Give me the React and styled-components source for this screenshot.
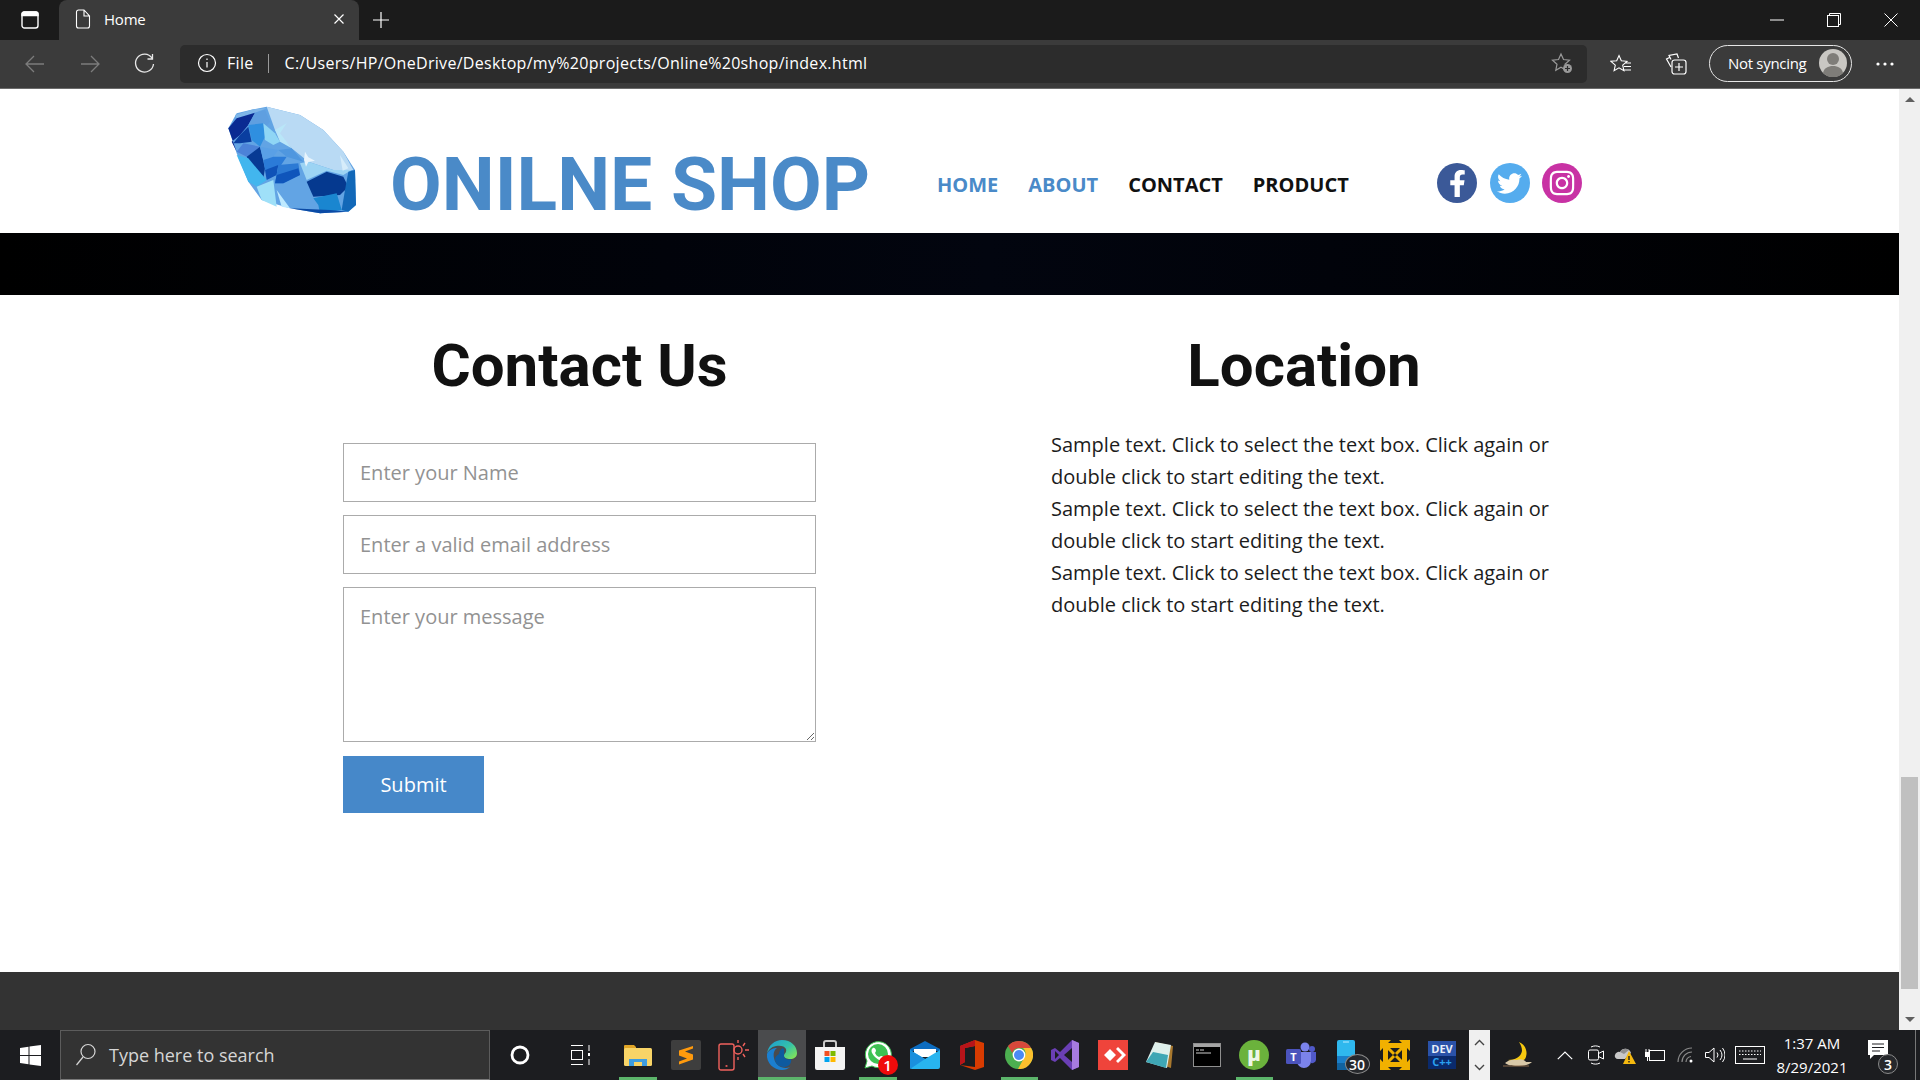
import React from "react";
import styled, { createGlobalStyle } from "styled-components";
import { FaFacebookF, FaTwitter, FaInstagram } from "react-icons/fa";

const GlobalStyle = createGlobalStyle`
    html, body {
        margin: 0;
        height: 100%;
        overflow: hidden;
    }
    * {
        box-sizing: border-box;
    }
`;

const Screen = styled.div`
    display: flex;
    flex-direction: column;
    width: 1920px;
    height: 1080px;
    font-family: "Open Sans", sans-serif;
    background: #fff;
`;

/* browser chrome */
const TitleBar = styled.div`
    display: flex;
    align-items: center;
    height: 40px;
    background: #1b1b1b;
    color: #fff;
`;

const TabsButton = styled.div`
    display: flex;
    justify-content: center;
    align-items: center;
    width: 59px;
    height: 40px;
`;

const Tab = styled.div`
    display: flex;
    align-items: center;
    width: 300px;
    height: 40px;
    padding: 0 14px 2px 16px;
    background: #3b3b3b;
    border-radius: 8px 8px 0 0;
    font-size: 15px;
    gap: 13px;
`;

const TabName = styled.span`
    flex: 1;
    letter-spacing: -0.2px;
`;

const NewTab = styled.div`
    display: flex;
    justify-content: center;
    align-items: center;
    width: 44px;
    height: 40px;
`;

const WindowControls = styled.div`
    display: flex;
    margin-left: auto;
    padding-right: 1px;
`;

const WindowButton = styled.div`
    display: flex;
    justify-content: center;
    align-items: center;
    width: 57px;
    height: 40px;
`;

const Toolbar = styled.div`
    display: flex;
    align-items: center;
    height: 49px;
    padding: 0 0 1px 7px;
    background: #3b3b3b;
    border-bottom: 1px solid #6b6b6b;
    color: #fff;
`;

const NavButton = styled.div`
    display: flex;
    justify-content: center;
    align-items: center;
    width: 55px;
    height: 38px;
    color: ${(p) => (p.$dim ? "#7c7c7c" : "#e8e8e8")};
`;

const AddressBar = styled.div`
    display: flex;
    align-items: center;
    width: 1407px;
    height: 38px;
    margin-left: 8px;
    padding: 0 14px 1px 17px;
    background: #2c2c2c;
    border-radius: 5px;
    font-size: 16px;
`;

const FileLabel = styled.span`
    margin-left: 10px;
    padding-right: 14px;
    border-right: 1px solid #9a9a9a;
    line-height: 19px;
    letter-spacing: 0.3px;
`;

const Url = styled.span`
    flex: 1;
    margin-left: 16px;
    letter-spacing: 0.3px;
    white-space: nowrap;
`;

const ToolIcon = styled.div`
    display: flex;
    justify-content: center;
    align-items: center;
    width: ${(p) => p.$w}px;
    height: 38px;
`;

const SyncPill = styled.div`
    display: flex;
    align-items: center;
    justify-content: space-between;
    width: 143px;
    height: 37px;
    margin-left: 12px;
    padding: 0 4px 1px 18px;
    border: 1px solid #e6e6e6;
    border-radius: 19px;
    font-size: 15px;
    letter-spacing: -0.3px;
`;

/* page */
const Viewport = styled.div`
    display: flex;
    flex: 1;
    min-height: 0;
`;

const Page = styled.div`
    display: flex;
    flex-direction: column;
    flex: 1;
    min-width: 0;
`;

const Header = styled.header`
    display: flex;
    align-items: flex-start;
    height: 144px;
    padding-left: 220px;
    background: #fff;
`;

const Logo = styled.svg`
    flex: none;
    width: 150px;
    height: 120px;
    margin-top: 11px;
`;

const Brand = styled.h1`
    width: 547px;
    margin: 53px 0 0 20px;
    font-family: Roboto, sans-serif;
    font-size: 75px;
    font-weight: 700;
    line-height: 84px;
    color: #4a8ac8;
    white-space: nowrap;
`;

const Nav = styled.nav`
    display: flex;
    gap: 30px;
    width: 500px;
    margin-top: 82px;
`;

const NavLink = styled.a`
    font-size: 20px;
    font-weight: 700;
    line-height: 28px;
    color: ${(p) => (p.$accent ? "#4a8ac8" : "#111")};
`;

const Socials = styled.div`
    display: flex;
    gap: 12.5px;
    margin-top: 74px;
`;

const SocialCircle = styled.a`
    display: flex;
    justify-content: center;
    align-items: center;
    width: 40px;
    height: 40px;
    border-radius: 50%;
    background: ${(p) => p.$bg};
    color: #fff;
    font-size: ${(p) => p.$size}px;
`;

const Banner = styled.div`
    height: 62px;
    background: linear-gradient(90deg, #000 0%, #01030a 35%, #02050f 52%, #01030a 70%, #000 100%);
`;

const Content = styled.main`
    display: flex;
    flex: 1;
    gap: 235px;
    padding: 35px 0 0 343px;
`;

const FormColumn = styled.section`
    width: 473px;
`;

const InfoColumn = styled.section`
    width: 506px;
`;

const Heading = styled.h2`
    margin: 0 0 ${(p) => p.$gap}px;
    font-family: Roboto, sans-serif;
    font-size: 60px;
    font-weight: 700;
    line-height: 72px;
    text-align: center;
    color: #111;
`;

const Input = styled.input`
    display: block;
    width: 100%;
    height: 59px;
    margin-bottom: 13px;
    padding: 0 16px;
    border: 1px solid #ababab;
    outline: none;
    font-family: "Open Sans", sans-serif;
    font-size: 20px;
    &::placeholder {
        color: #929292;
    }
`;

const Message = styled.textarea`
    display: block;
    width: 100%;
    height: 155px;
    margin-bottom: 14px;
    padding: 15px 16px;
    border: 1px solid #ababab;
    outline: none;
    font-family: "Open Sans", sans-serif;
    font-size: 20px;
    &::placeholder {
        color: #929292;
    }
`;

const SubmitButton = styled.button`
    width: 141px;
    height: 57px;
    border: none;
    background: #4688c9;
    color: #fff;
    font-family: "Open Sans", sans-serif;
    font-size: 20px;
`;

const Paragraph = styled.p`
    margin: 0;
    font-size: 20px;
    line-height: 32px;
    color: #1c1c1c;
`;

const Footer = styled.footer`
    height: 58px;
    background: #333;
`;

const Scrollbar = styled.aside`
    display: flex;
    flex-direction: column;
    align-items: center;
    width: 21px;
    padding-top: 8px;
    background: #f0f0f0;
`;

const ScrollThumb = styled.div`
    width: 17px;
    height: 212px;
    margin-top: auto;
    margin-bottom: 28px;
    background: #c0c0c0;
`;

const ScrollArrow = styled.div`
    width: 0;
    height: 0;
    margin-bottom: ${(p) => p.$bottom || 0}px;
    border-left: 5px solid transparent;
    border-right: 5px solid transparent;
    ${(p) => (p.$up ? "border-bottom" : "border-top")}: 5px solid #606060;
`;

/* taskbar */
const Taskbar = styled.div`
    display: flex;
    height: 50px;
    background: #1c1d20;
    color: #fff;
`;

const StartButton = styled.div`
    display: flex;
    flex: none;
    justify-content: center;
    align-items: center;
    width: 60px;
`;

const SearchBox = styled.div`
    display: flex;
    flex: none;
    align-items: center;
    width: 430px;
    padding-left: 14px;
    gap: 13px;
    background: #333;
    border: 1px solid #5c5c5c;
    border-bottom-color: #7a7a7a;
    color: #d6d6d6;
    font-size: 18px;
`;

const ShellButton = styled.div`
    display: flex;
    flex: none;
    justify-content: center;
    align-items: center;
    width: 60px;
`;

const Pinned = styled.div`
    display: flex;
    flex: none;
    margin-left: 3.5px;
    width: 855.5px;
`;

const Tile = styled.div`
    position: relative;
    display: flex;
    flex: none;
    justify-content: center;
    align-items: center;
    width: ${(p) => (p.$wide ? 48 : 47)}px;
    background: ${(p) => (p.$active ? "#4a4b4d" : "transparent")};
    &::after {
        content: "";
        display: ${(p) => (p.$running ? "block" : "none")};
        position: absolute;
        bottom: 0;
        left: ${(p) => (p.$active ? 0 : 5)}px;
        right: ${(p) => (p.$active ? 0 : 5)}px;
        height: 3px;
        background: #5cb56b;
    }
`;

const OverflowStrip = styled.div`
    display: flex;
    flex: none;
    flex-direction: column;
    justify-content: space-around;
    align-items: center;
    width: 21px;
    background: #f0f0f0;
    color: #444;
`;

const TraySlot = styled.div`
    display: flex;
    justify-content: center;
    align-items: center;
    flex: none;
    width: ${(p) => p.$w}px;
`;

const Clock = styled(TraySlot)`
    flex-direction: column;
    font-size: 15px;
    line-height: 24px;
    white-space: nowrap;
`;

const TrayEdge = styled.div`
    flex: none;
    width: 6px;
    border-right: 1px solid #777;
`;

const line = { fill: "none", stroke: "currentColor" };

const Gem = () => (
    <Logo viewBox="0 0 450 360">
        <polygon fill="#62a4e4" points="140,20 240,45 310,90 370,155 405,210 408,315 385,335 300,340 210,325 125,300 85,245 50,160 25,85 50,40 100,28" />
        <polygon fill="#b9daf4" points="140,20 240,45 310,90 370,155 400,210 340,210 265,185 215,145 165,90" />
        <polygon fill="#7fb6e8" points="45,45 100,28 140,25 105,38 50,55" />
        <polygon fill="#0a2a92" points="25,85 50,55 105,38 85,75 60,105 35,125 50,155" />
        <polygon fill="#5f9fe0" points="105,38 135,30 150,65 130,90 85,75" />
        <polygon fill="#2f8fe0" points="85,75 130,70 135,110 120,140 95,120" />
        <polygon fill="#8fd6f5" points="130,70 165,100 180,125 160,135 135,120" />
        <polygon fill="#b9e6f8" points="165,90 200,70 180,100 215,145 180,125" />
        <polygon fill="#0a3ea0" points="60,105 85,80 95,125 60,130 40,130" />
        <polygon fill="#4c82d8" points="50,155 70,130 120,140 80,170" />
        <polygon fill="#073a94" points="80,170 120,140 135,205 130,235 100,205" />
        <polygon fill="#5aa0e6" points="120,140 175,150 160,170 130,180" />
        <polygon fill="#2b7bd8" points="130,180 160,170 200,170 180,200 135,210" />
        <polygon fill="#4f97df" points="175,150 215,145 250,185 200,170" />
        <polygon fill="#0f52b8" points="135,210 175,195 170,225 140,240" />
        <polygon fill="#2c7ad4" points="175,195 235,190 240,225 190,250 165,250" />
        <polygon fill="#0f55bb" points="165,250 170,225 235,205 240,225 190,250" />
        <polygon fill="#42b6ee" points="50,165 85,175 140,240 110,260 85,245" />
        <polygon fill="#9fe0f8" points="110,260 160,240 170,320 125,300" />
        <polygon fill="#bfeaff" points="170,270 210,325 185,320" />
        <polygon fill="#9cd4f4" points="265,185 340,210 395,210 370,225 320,212 260,240 240,190" />
        <polygon fill="#05398f" points="260,245 320,215 370,230 385,260 360,285 280,290" />
        <polygon fill="#1268b8" points="385,215 405,210 408,315 385,335 365,330 375,270" />
        <polygon fill="#1a86d0" points="280,295 350,280 365,330 300,340 295,315" />
        <polygon fill="#0b4aa5" points="210,325 300,340 385,335 330,330" />
        <polygon fill="#d6ecfa" points="360,165 385,205 368,212" />
        <polygon fill="#e8f4fc" points="255,155 265,172 285,182 265,186 258,200 252,180" />
    </Logo>
);

const EdgeLogo = () => (
    <svg width="32" height="32" viewBox="0 0 32 32">
        <defs>
            <linearGradient id="edgeTop" x1="0" y1="0" x2="1" y2="0.8">
                <stop offset="0" stopColor="#1a9ad6" />
                <stop offset="0.6" stopColor="#35c1a8" />
                <stop offset="1" stopColor="#7ee35c" />
            </linearGradient>
        </defs>
        <path d="M1 15C2 6 9 1 16 1c9 0 15 6 15 13 0 4-3 6-7 6-3 0-6-1-6-3 0-3 3-3 2-7C19 7 14 6 10 7 5 8 2 11 1 15z" fill="url(#edgeTop)" />
        <path d="M1 15c2-5 7-6 10-6-3 2-4 6-3 10 1 6 6 10 12 10 2 0 4-1 5-2-3 3-6 4-9 4C8 31 0 24 1 15z" fill="#1b7fd0" />
        <path d="M13 15c0-3 2-5 4-6 2 2 1 5 1 8 0 3 4 4 7 3 1 4-2 8-7 8-6 0-9-4-9-8 0-2 2-4 4-5z" fill="#0e5a9f" />
    </svg>
);

const pinnedIcons = [
    {
        running: true,
        icon: (
            <svg width="28" height="24" viewBox="0 0 28 24">
                <path d="M0 3a1 1 0 0 1 1-1h9l2 2v3H0z" fill="#e0a527" />
                <rect y="5" width="28" height="18" rx="1.5" fill="#f8d467" />
                <path d="M5 23v-7h18v7h-5v-4h-8v4z" fill="#3e9de0" />
            </svg>
        ),
    },
    {
        icon: (
            <svg width="30" height="30" viewBox="0 0 30 30">
                <rect width="30" height="30" rx="2" fill="#3e3e3e" />
                <path d="M22 6 8 10.5v5l8 3-8 3v3l14-5v-5l-8-3 8-3z" fill="#ff9a0d" />
            </svg>
        ),
    },
    {
        icon: (
            <svg width="32" height="32" viewBox="0 0 32 32" fill="none" stroke="#f0625d" strokeWidth="1.4">
                <rect x="1" y="5" width="15" height="26" rx="2" />
                <circle cx="8.5" cy="27" r=".4" />
                <circle cx="20" cy="11" r="4" />
                <path d="M20 1v3M27 4l-2 3M31 11h-4M27 18l-2-3M20 21v-3" />
            </svg>
        ),
    },
    { running: true, active: true, icon: <EdgeLogo /> },
    {
        icon: (
            <svg width="30" height="30" viewBox="0 0 30 30">
                <path d="M9 8V3a2 2 0 0 1 2-2h8a2 2 0 0 1 2 2v5" fill="none" stroke="#c9c9c9" strokeWidth="2" />
                <path d="M0 7h30v21a2 2 0 0 1-2 2H2a2 2 0 0 1-2-2z" fill="#f4f4f4" />
                <rect x="9.5" y="11" width="5" height="5" fill="#f25022" />
                <rect x="15.5" y="11" width="5" height="5" fill="#7fba00" />
                <rect x="9.5" y="17" width="5" height="5" fill="#00a4ef" />
                <rect x="15.5" y="17" width="5" height="5" fill="#ffb900" />
            </svg>
        ),
    },
    {
        running: true,
        badge: "1",
        icon: (
            <svg width="30" height="30" viewBox="0 0 30 30">
                <path d="M2 28l2-7A13 13 0 1 1 9 26z" fill="#fff" stroke="#3ec254" strokeWidth="1" />
                <circle cx="15" cy="14" r="10" fill="#3ec254" />
                <path d="M10 8c2-1 3 2 3 3l-1 2c1 2 2 3 4 4l2-1c1 0 4 1 3 3-2 3-6 1-9-2s-5-7-2-9z" fill="#fff" />
            </svg>
        ),
    },
    {
        icon: (
            <svg width="30" height="28" viewBox="0 0 30 28">
                <path d="M0 8 15 0l15 8v2H0z" fill="#0c6cc0" />
                <path d="M4 8h22v8H4z" fill="#fff" />
                <path d="M0 9l15 9 15-9v17a2 2 0 0 1-2 2H2a2 2 0 0 1-2-2z" fill="#28b4ef" />
                <path d="M0 9l15 9-15 10z" fill="#1a8fdd" />
            </svg>
        ),
    },
    {
        icon: (
            <svg width="24" height="30" viewBox="0 0 24 30">
                <path d="M0 6 15 0l9 3v24l-9 3-15-5 15 2V6L5 8v14l-5 3z" fill="#d83b01" />
                <path d="M0 6 15 0v6L5 8v14l-5 3z" fill="#b7141a" />
            </svg>
        ),
    },
    {
        running: true,
        icon: (
            <svg width="28" height="28" viewBox="0 0 28 28">
                <circle cx="14" cy="14" r="14" fill="#4caf50" />
                <path d="M14 0a14 14 0 0 1 12.1 7H14a7 7 0 0 0-6.7 5L3 5a14 14 0 0 1 11-5z" fill="#d9483b" />
                <path d="M26.1 7A14 14 0 0 1 13 28l6-11a7 7 0 0 0-1-10z" fill="#fbc02d" />
                <circle cx="14" cy="14" r="6.4" fill="#fff" />
                <circle cx="14" cy="14" r="5" fill="#4a8af4" />
            </svg>
        ),
    },
    {
        icon: (
            <svg width="30" height="30" viewBox="0 0 30 30">
                <path d="M21 0 9 12l-5-4-4 2v10l4 2 5-4 12 12 7-3V3z" fill="#6a3fb5" />
                <path d="M21 8v14l-8-7z" fill="#1c1d20" />
                <path d="M21 0l7 3v24l-7 3z" fill="#a77be0" />
                <path d="M4 11l4 4-4 4z" fill="#1c1d20" />
            </svg>
        ),
    },
    {
        icon: (
            <svg width="30" height="30" viewBox="0 0 30 30">
                <rect width="30" height="30" fill="#ef443b" />
                <path d="M12 9l6 6-6 6-6-6zM18 9l2-2 8 8-8 8-2-2 6-6z" fill="#fff" />
            </svg>
        ),
    },
    {
        icon: (
            <svg width="28" height="28" viewBox="0 0 28 28">
                <path d="M9 1 27 5l-2 22-6-2z" fill="#a8782e" />
                <path d="M9 1 25 4 21 27 0 21z" fill="#dff0ec" />
                <path d="M7 11 22 14 20 27 0 21z" fill="#3fa7b5" />
            </svg>
        ),
    },
    {
        icon: (
            <svg width="28" height="24" viewBox="0 0 28 24">
                <rect x=".5" y=".5" width="27" height="23" fill="#000" stroke="#8f8f8f" />
                <rect x="1" y="1" width="26" height="3" fill="#a5a5a5" />
                <path d="M3 7h3M7 7h4M3 10h5M8 10h10" stroke="#cfcfcf" strokeWidth="1" />
            </svg>
        ),
    },
    {
        running: true,
        icon: (
            <svg width="30" height="30" viewBox="0 0 30 30">
                <circle cx="15" cy="15" r="15" fill="#6bb23c" />
                <text x="15" y="21" textAnchor="middle" fontFamily="Open Sans" fontWeight="800" fontSize="20" fill="#eef6e8">µ</text>
            </svg>
        ),
    },
    {
        icon: (
            <svg width="30" height="26" viewBox="0 0 30 26">
                <circle cx="19" cy="5" r="4.5" fill="#7b83eb" />
                <circle cx="26" cy="7" r="3" fill="#5059c9" />
                <path d="M21 10h9v8a4 4 0 0 1-5 3z" fill="#5059c9" />
                <path d="M9 10h16v9a7 7 0 0 1-14 0z" fill="#7b83eb" />
                <rect y="7" width="15" height="15" rx="1.5" fill="#4b53bc" />
                <text x="7.5" y="19" textAnchor="middle" fontFamily="Open Sans" fontWeight="700" fontSize="11" fill="#fff">T</text>
            </svg>
        ),
    },
    {
        badge30: true,
        icon: (
            <svg width="22" height="30" viewBox="0 0 22 30">
                <path d="M0 2a2 2 0 0 1 2-2h14a2 2 0 0 1 2 2v28H2a2 2 0 0 1-2-2z" fill="#2fb8ee" />
                <rect y="16" width="18" height="7" fill="#1a7fc9" />
                <rect y="23" width="18" height="7" fill="#11629f" />
                <rect x="6" y="1.5" width="6" height="1" fill="#b9ecff" />
            </svg>
        ),
    },
    {
        icon: (
            <svg width="30" height="30" viewBox="0 0 30 30">
                <path d="M0 0h11L8 3h14l-3-3h11v11l-3-3v14l3-3v11H19l3-3H8l3 3H0V19l3 3V8l-3 3z" fill="#f1b000" />
                <path d="M8 8h14v14H8z" fill="#1c1d20" />
                <path d="M6 6l8 8M24 6l-8 8M6 24l8-8M24 24l-8-8" stroke="#f1b000" strokeWidth="3" />
            </svg>
        ),
    },
    {
        icon: (
            <svg width="28" height="28" viewBox="0 0 28 28">
                <rect width="28" height="28" fill="#2a52a8" />
                <rect y="15" width="28" height="13" fill="#0a2a6c" />
                <text x="14" y="12" textAnchor="middle" fontFamily="Open Sans" fontWeight="700" fontSize="11" fill="#e8eef8">DEV</text>
                <text x="14" y="25" textAnchor="middle" fontFamily="Open Sans" fontWeight="700" fontSize="11" fill="#2aa0f0">C++</text>
            </svg>
        ),
    },
];

const TileBadge = styled.span`
    position: absolute;
    display: flex;
    justify-content: center;
    align-items: center;
    left: 24px;
    top: 25px;
    width: 20px;
    height: 20px;
    border-radius: 50%;
    background: #f00b0b;
    color: #fff;
    font-size: 15px;
    font-weight: 600;
`;

const CountBadge = styled.span`
    position: absolute;
    display: flex;
    justify-content: center;
    align-items: center;
    left: 20px;
    top: 24px;
    width: 25px;
    height: 20px;
    border-radius: 50%;
    background: #26282c;
    border: 1px solid #8a8a8a;
    color: #fff;
    font-size: 14px;
    font-weight: 600;
`;

const NotifyBadge = styled.span`
    position: absolute;
    display: flex;
    justify-content: center;
    align-items: center;
    left: 10px;
    top: 14px;
    width: 20px;
    height: 20px;
    border-radius: 50%;
    background: #26282c;
    border: 1px solid #8a8a8a;
    color: #fff;
    font-size: 14px;
    font-weight: 600;
`;

const NotifyIcon = styled.div`
    position: relative;
    width: 24px;
    height: 30px;
`;

const paragraphLines = [1, 2, 3];

export default function App() {
    return (
        <Screen>
            <GlobalStyle />
            <TitleBar>
                <TabsButton>
                    <svg width="18" height="18" viewBox="0 0 18 18" {...line} strokeWidth="1.4">
                        <rect x="1" y="1" width="16" height="16" rx="2.5" />
                        <path d="M1 4.5h16V3a2 2 0 0 0-2-2H3a2 2 0 0 0-2 2z" fill="currentColor" />
                    </svg>
                </TabsButton>
                <Tab>
                    <svg width="16" height="20" viewBox="0 0 16 20" {...line} strokeWidth="1.1">
                        <path d="M1.5 3a2 2 0 0 1 2-2H9l5.500 6v10a2 2 0 0 1-2 2h-9a2 2 0 0 1-2-2zM9 1v6h5.500" />
                    </svg>
                    <TabName>Home</TabName>
                    <svg width="12" height="12" viewBox="0 0 12 12" {...line} strokeWidth="1.2">
                        <path d="M1.500 1.500l9 9M10.500 1.500l-9 9" />
                    </svg>
                </Tab>
                <NewTab>
                    <svg width="18" height="18" viewBox="0 0 18 18" {...line} strokeWidth="1.2">
                        <path d="M9 1v16M1 9h16" />
                    </svg>
                </NewTab>
                <WindowControls>
                    <WindowButton>
                        <svg width="14" height="2" viewBox="0 0 14 2" {...line}>
                            <path d="M0 1h14" />
                        </svg>
                    </WindowButton>
                    <WindowButton>
                        <svg width="14" height="14" viewBox="0 0 14 14" {...line}>
                            <rect x=".5" y="2.500" width="11" height="11" />
                            <path d="M2.500 2.500v-2h11v11h-2" />
                        </svg>
                    </WindowButton>
                    <WindowButton>
                        <svg width="14" height="14" viewBox="0 0 14 14" {...line}>
                            <path d="M.5.5l13 13M13.500.5l-13 13" />
                        </svg>
                    </WindowButton>
                </WindowControls>
            </TitleBar>

            <Toolbar>
                <NavButton $dim>
                    <svg width="20" height="18" viewBox="0 0 20 18" {...line} strokeWidth="1.3">
                        <path d="M19 9H1M9 1 1 9l8 8" />
                    </svg>
                </NavButton>
                <NavButton $dim>
                    <svg width="20" height="18" viewBox="0 0 20 18" {...line} strokeWidth="1.3">
                        <path d="M1 9h18M11 1l8 8-8 8" />
                    </svg>
                </NavButton>
                <NavButton>
                    <svg width="21" height="21" viewBox="0 0 21 21" {...line} strokeWidth="1.3">
                        <path d="M18 5a9 9 0 1 0 1.500 6M18.500 1v5h-5" />
                    </svg>
                </NavButton>
                <AddressBar>
                    <svg width="20" height="20" viewBox="0 0 20 20" {...line} strokeWidth="1.2">
                        <circle cx="10" cy="10" r="8.500" />
                        <path d="M10 9v5.500M10 5.500v1.500" />
                    </svg>
                    <FileLabel>File</FileLabel>
                    <Url>C:/Users/HP/OneDrive/Desktop/my%20projects/Online%20shop/index.html</Url>
                    <svg width="22" height="22" viewBox="0 0 22 22" {...line} stroke="#9a9a9a" strokeWidth="1.2">
                        <path d="M10 2l2.500 5.500 6 .7-4.500 4 1.200 6-5.200-3-5.200 3 1.200-6-4.500-4 6-.7z" />
                        <circle cx="16.500" cy="16.500" r="4.500" fill="#9a9a9a" stroke="none" />
                        <path d="M16.500 14v5M14 16.500h5" stroke="#2c2c2c" />
                    </svg>
                </AddressBar>
                <ToolIcon $w={68}>
                    <svg width="22" height="20" viewBox="0 0 22 20" {...line} strokeWidth="1.1">
                        <path d="M9 1.500l2.300 5.200 5.700.6-4.300 3.800 1.200 5.600L9 13.800l-4.900 2.900 1.200-5.600L1 7.300l5.700-.6zM15 9h6M14 12.500h7M13 16h8" />
                    </svg>
                </ToolIcon>
                <ToolIcon $w={42}>
                    <svg width="22" height="22" viewBox="0 0 22 22" {...line} strokeWidth="1.2">
                        <path d="M6 6.500 4 2.500 12 1l1.500 4M6 14 1.500 6l3-1.500" />
                        <rect x="7" y="7" width="14" height="14" rx="2.500" />
                        <path d="M14 10v8M10 14h8" />
                    </svg>
                </ToolIcon>
                <SyncPill>
                    Not syncing
                    <svg width="28" height="28" viewBox="0 0 28 28">
                        <circle cx="14" cy="14" r="14" fill="#c9c7c3" />
                        <circle cx="14" cy="10" r="6" fill="#7f7d79" />
                        <path d="M4 24c1-5 5-7 10-7s9 2 10 7a14 14 0 0 1-20 0z" fill="#7f7d79" />
                    </svg>
                </SyncPill>
                <ToolIcon $w={66}>
                    <svg width="18" height="4" viewBox="0 0 18 4" fill="#fff">
                        <circle cx="2" cy="2" r="1.600" />
                        <circle cx="9" cy="2" r="1.600" />
                        <circle cx="16" cy="2" r="1.600" />
                    </svg>
                </ToolIcon>
            </Toolbar>

            <Viewport>
                <Page>
                    <Header>
                        <Gem />
                        <Brand>ONILNE SHOP</Brand>
                        <Nav>
                            <NavLink $accent>HOME</NavLink>
                            <NavLink $accent>ABOUT</NavLink>
                            <NavLink>CONTACT</NavLink>
                            <NavLink>PRODUCT</NavLink>
                        </Nav>
                        <Socials>
                            <SocialCircle $bg="#3b5998" $size={27}>
                                <FaFacebookF />
                            </SocialCircle>
                            <SocialCircle $bg="#55acee" $size={25}>
                                <FaTwitter />
                            </SocialCircle>
                            <SocialCircle $bg="#c832a4" $size={28}>
                                <FaInstagram />
                            </SocialCircle>
                        </Socials>
                    </Header>
                    <Banner />
                    <Content>
                        <FormColumn>
                            <Heading $gap={41}>Contact Us</Heading>
                            <Input placeholder="Enter your Name" />
                            <Input placeholder="Enter a valid email address" />
                            <Message placeholder="Enter your message" />
                            <SubmitButton>Submit</SubmitButton>
                        </FormColumn>
                        <InfoColumn>
                            <Heading $gap={27}>Location</Heading>
                            {paragraphLines.map((n) => (
                                <Paragraph key={n}>
                                    Sample text. Click to select the text box. Click again or double click to start editing the text.
                                </Paragraph>
                            ))}
                        </InfoColumn>
                    </Content>
                    <Footer />
                </Page>
                <Scrollbar>
                    <ScrollArrow $up />
                    <ScrollThumb />
                    <ScrollArrow $bottom={8} />
                </Scrollbar>
            </Viewport>

            <Taskbar>
                <StartButton>
                    <svg width="21" height="21" viewBox="0 0 21 21" fill="#fff">
                        <path d="M0 3l8.500-1.200V10H0zM9.500 1.600 21 0v10H9.500zM0 11h8.500v8.200L0 18zM9.500 11H21v10L9.500 19.400z" />
                    </svg>
                </StartButton>
                <SearchBox>
                    <svg width="21" height="24" viewBox="0 0 21 24" {...line} strokeWidth="1.2">
                        <circle cx="13" cy="8.500" r="7" />
                        <path d="M8 14 1.500 22" />
                    </svg>
                    Type here to search
                </SearchBox>
                <ShellButton>
                    <svg width="20" height="20" viewBox="0 0 20 20" {...line} strokeWidth="2.800">
                        <circle cx="10" cy="10" r="8" />
                    </svg>
                </ShellButton>
                <ShellButton>
                    <svg width="20" height="22" viewBox="0 0 20 22" {...line}>
                        <path d="M1 1.500h12M1 20.500h12M19 1v6M19 15v6" />
                        <rect x="1.500" y="6.500" width="11" height="9" />
                        <rect x="18" y="9" width="2" height="3" fill="#fff" stroke="none" />
                    </svg>
                </ShellButton>
                <Pinned>
                    {pinnedIcons.map((item, i) => (
                        <Tile key={i} $wide={i < 6} $running={item.running} $active={item.active}>
                            {item.icon}
                            {item.badge && <TileBadge>{item.badge}</TileBadge>}
                            {item.badge30 && <CountBadge>30</CountBadge>}
                        </Tile>
                    ))}
                </Pinned>
                <OverflowStrip>
                    <svg width="11" height="7" viewBox="0 0 11 7" {...line} strokeWidth="1.4">
                        <path d="M1 6l4.500-4.500L10 6" />
                    </svg>
                    <svg width="11" height="7" viewBox="0 0 11 7" {...line} strokeWidth="1.4">
                        <path d="M1 1l4.500 4.500L10 1" />
                    </svg>
                </OverflowStrip>
                <TraySlot $w={56}>
                    <svg width="30" height="28" viewBox="0 0 30 28">
                        <path d="M16 1a12 12 0 0 1 6 17c-3 3-10 4-17 1 7 0 13-3 14-9 0-3-1-6-3-9z" fill="#f7c90f" />
                        <path d="M2 22c3-3 8-4 12-3 4-2 8 0 9 2h6c-3 3-8 4-13 4s-10 0-14-3z" fill="#d8c8a8" />
                        <path d="M0 25h26" stroke="#8a6a4a" strokeWidth="1" />
                    </svg>
                </TraySlot>
                <TraySlot $w={38}>
                    <svg width="16" height="9" viewBox="0 0 16 9" {...line} strokeWidth="1.200">
                        <path d="M.8 8.200 8 1l7.200 7.200" />
                    </svg>
                </TraySlot>
                <TraySlot $w={24}>
                    <svg width="16" height="20" viewBox="0 0 16 20" {...line}>
                        <path d="M3 2c3-1.500 6-1.500 9 0M3 18c3 1.500 6 1.500 9 0" />
                        <rect x=".5" y="5" width="10" height="10" rx="1.500" />
                        <path d="M10.500 8.500l5-2.500v8l-5-2.500" />
                    </svg>
                </TraySlot>
                <TraySlot $w={34}>
                    <svg width="22" height="18" viewBox="0 0 22 18">
                        <path d="M1 9a4 4 0 0 1 5-3 6 6 0 0 1 11 1l-6 6H4a3 3 0 0 1-3-4z" fill="#c8c8c8" />
                        <path d="M6 6a6 6 0 0 1 9-2l-5 4z" fill="#8f8f8f" />
                        <path d="M15 5l7 13H9z" fill="#f5b90f" />
                        <path d="M15 10v4M15 15v1.500" stroke="#1c1d20" strokeWidth="1.400" />
                    </svg>
                </TraySlot>
                <TraySlot $w={26}>
                    <svg width="20" height="14" viewBox="0 0 20 14" {...line}>
                        <rect x="4.500" y="2.500" width="15" height="10" />
                        <rect x="0" y="4" width="5" height="5" fill="#fff" stroke="none" />
                        <path d="M1 1v3M4 1v3M2.500 9v4" />
                    </svg>
                </TraySlot>
                <TraySlot $w={36}>
                    <svg width="18" height="16" viewBox="0 0 18 16" {...line} stroke="#8a8a8a" strokeWidth="1.200">
                        <path d="M1 15A14 14 0 0 1 15 1M5 15A10 10 0 0 1 15 5M9 15a6 6 0 0 1 5-5.500" />
                        <circle cx="14" cy="14" r="1.500" fill="#fff" stroke="none" />
                    </svg>
                </TraySlot>
                <TraySlot $w={22}>
                    <svg width="20" height="16" viewBox="0 0 20 16" {...line}>
                        <path d="M.5 5.500h3.500L9 1v14l-5-4.500H.5zM12 5.500a4 4 0 0 1 0 5M15 3a8 8 0 0 1 0 10M17.500 1a11 11 0 0 1 0 14" />
                    </svg>
                </TraySlot>
                <TraySlot $w={48}>
                    <svg width="30" height="18" viewBox="0 0 30 18" {...line}>
                        <rect x=".5" y=".5" width="29" height="17" />
                        <path d="M4 5h22M4 8.500h22" strokeDasharray="1.500 1.500" />
                        <path d="M8 13h14" />
                    </svg>
                </TraySlot>
                <Clock $w={76}>
                    <span>1:37 AM</span>
                    <span>8/29/2021</span>
                </Clock>
                <TraySlot $w={60}>
                    <NotifyIcon>
                        <svg width="20" height="20" viewBox="0 0 20 20">
                            <path d="M0 0h20v15H6l-4 4v-4H0z" fill="#fff" />
                            <path d="M4 4h12M4 7.500h12M4 11h8" stroke="#1c1d20" />
                        </svg>
                        <NotifyBadge>3</NotifyBadge>
                    </NotifyIcon>
                </TraySlot>
                <TrayEdge />
            </Taskbar>
        </Screen>
    );
}
